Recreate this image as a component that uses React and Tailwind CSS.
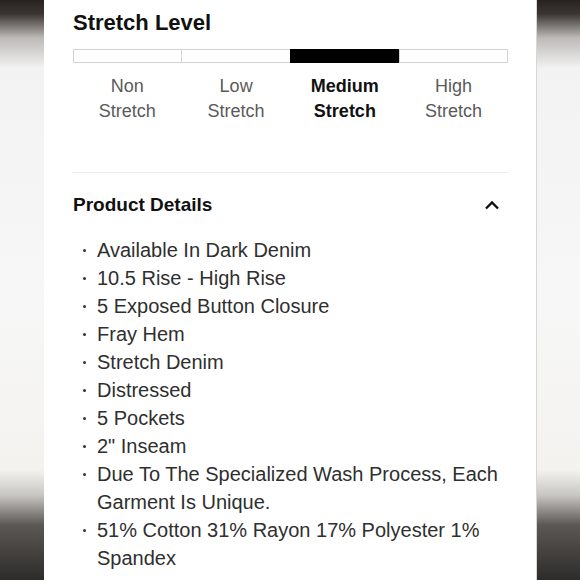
import React from "react";

const levels = [
  { top: "Non", bottom: "Stretch" },
  { top: "Low", bottom: "Stretch" },
  { top: "Medium", bottom: "Stretch", active: true },
  { top: "High", bottom: "Stretch" },
];

const details = [
  "Available In Dark Denim",
  "10.5 Rise - High Rise",
  "5 Exposed Button Closure",
  "Fray Hem",
  "Stretch Denim",
  "Distressed",
  "5 Pockets",
  '2" Inseam',
  "Due To The Specialized Wash Process, Each Garment Is Unique.",
  "51% Cotton 31% Rayon 17% Polyester 1% Spandex",
];

const App = () => {
  return (
    <div className="w-[580px] h-[580px] overflow-hidden bg-[linear-gradient(to_bottom,#27221f_0px,#3b3633_14px,#bdbab8_38px,#f2f2f2_68px,#f7f7f7_300px,#f3f2ef_470px,#c9c7c4_495px,#5a5754_525px,#2e2c2a_580px)] font-['Liberation_Sans',Arial,sans-serif]">
      <div className="ml-[44px] w-[493px] h-[580px] bg-white border-r border-[#d6d6d6] pl-[29px] pr-[28px]">
        {/* --- Stretch Level --- */}
        <h2 className="pt-[8px] text-[22px] leading-[30px] font-bold text-[#111]">
          Stretch Level
        </h2>
        <div className="mt-[11px] flex h-[14px]">
          {levels.map((l, i) => (
            <div
              key={i}
              className={
                l.active
                  ? "flex-1 bg-black border border-black"
                  : i === levels.length - 1
                  ? "flex-1 border border-[#d4d4d4]"
                  : "flex-1 border-y border-l border-[#d4d4d4]"
              }
            />
          ))}
        </div>
        <div className="mt-[11px] grid grid-cols-4 text-center text-[18px] leading-[25px]">
          {levels.map((l, i) => (
            <div
              key={i}
              className={l.active ? "font-bold text-[#111]" : "text-[#5a5a5a]"}
            >
              <div>{l.top}</div>
              <div>{l.bottom}</div>
            </div>
          ))}
        </div>

        <div className="mt-[48px] h-px bg-[#ececec]" />

        {/* --- Product Details --- */}
        <div className="mt-[18px] flex items-center justify-between h-[28px]">
          <span className="text-[19px] font-bold text-[#111]">Product Details</span>
          <svg width="16" height="10" viewBox="0 0 16 10" className="mr-[8px]">
            <polyline
              points="2,8.5 8,2.5 14,8.5"
              fill="none"
              stroke="#111"
              strokeWidth="2.4"
            />
          </svg>
        </div>

        <ul className="mt-[17px] text-[20px] leading-[28px] text-[#2f2f2f]">
          {details.map((d, i) => (
            <li key={i} className="flex">
              <span className="w-[24px] shrink-0">
                <span className="block ml-[10px] mt-[12.5px] h-[3px] w-[3px] rounded-full bg-[#333]" />
              </span>
              <span className="pr-[4px]">{d}</span>
            </li>
          ))}
        </ul>
      </div>
    </div>
  );
};

export default App;
